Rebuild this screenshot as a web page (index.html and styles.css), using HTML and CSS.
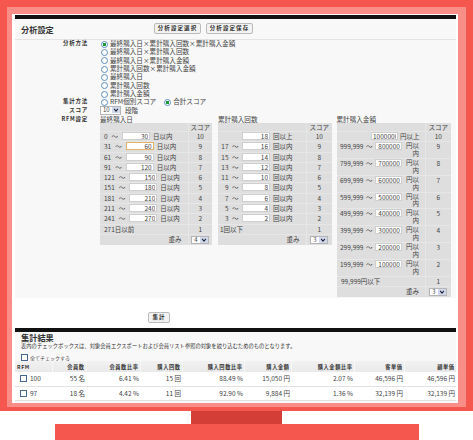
FILE: index.html
```html
<!DOCTYPE html>
<html lang="ja">
<head>
<meta charset="utf-8">
<title>分析設定</title>
<link rel="stylesheet" href="styles.css">
</head>
<body>
<div class="monitor">
  <div class="frame">
    <div class="bezel">
      <div class="screen">
        <section class="panel">
          <header class="panel-head">
            <h2 class="title">分析設定</h2>
            <button class="btn">分析設定選択</button>
            <button class="btn">分析設定保存</button>
          </header>
          <div class="form">
            <div class="label label-first">分析方法</div>
            <div class="radios">
              <label class="radio-row"><input type="radio" name="m" checked>最終購入日×累計購入回数×累計購入金額</label>
              <label class="radio-row"><input type="radio" name="m">最終購入日×累計購入回数</label>
              <label class="radio-row"><input type="radio" name="m">最終購入日×累計購入金額</label>
              <label class="radio-row"><input type="radio" name="m">累計購入回数×累計購入金額</label>
              <label class="radio-row"><input type="radio" name="m">最終購入日</label>
              <label class="radio-row"><input type="radio" name="m">累計購入回数</label>
              <label class="radio-row"><input type="radio" name="m">累計購入金額</label>
            </div>
            <div class="label">集計方法</div>
            <div class="radio-line">
              <label class="radio-row"><input type="radio" name="t">RFM個別スコア</label>
              <label class="radio-row"><input type="radio" name="t" checked>合計スコア</label>
            </div>
            <div class="label">スコア</div>
            <div class="score-line"><span class="select select-wide"><span>10</span><svg viewBox="0 0 8 8"><path d="M1.5 2.5 4 5.5 6.500 2.500"/></svg></span><span>段階</span></div>
            <div class="label">RFM設定</div>
            <div class="tables">
              <div class="block b1">
                <div class="block-title">最終購入日</div>
                <table class="rfm">
                  <tr class="r-head"><td></td><td class="sc">スコア</td></tr>
                  <tr><td>0<span class="tilde">～</span><input class="num" value="30"><span class="unit">日以内</span></td><td class="sc">10</td></tr>
                  <tr><td>31<span class="tilde">～</span><input class="num focus" value="60"><span class="unit">日以内</span></td><td class="sc">9</td></tr>
                  <tr><td>61<span class="tilde">～</span><input class="num" value="90"><span class="unit">日以内</span></td><td class="sc">8</td></tr>
                  <tr><td>91<span class="tilde">～</span><input class="num" value="120"><span class="unit">日以内</span></td><td class="sc">7</td></tr>
                  <tr><td>121<span class="tilde">～</span><input class="num" value="150"><span class="unit">日以内</span></td><td class="sc">6</td></tr>
                  <tr><td>151<span class="tilde">～</span><input class="num" value="180"><span class="unit">日以内</span></td><td class="sc">5</td></tr>
                  <tr><td>181<span class="tilde">～</span><input class="num" value="210"><span class="unit">日以内</span></td><td class="sc">4</td></tr>
                  <tr><td>211<span class="tilde">～</span><input class="num" value="240"><span class="unit">日以内</span></td><td class="sc">3</td></tr>
                  <tr><td>241<span class="tilde">～</span><input class="num" value="270"><span class="unit">日以内</span></td><td class="sc">2</td></tr>
                  <tr><td>271日以前</td><td class="sc">1</td></tr>
                  <tr class="r-foot"><td class="weight">重み</td><td class="sc"><span class="select"><span>4</span><svg viewBox="0 0 8 8"><path d="M1.5 2.5 4 5.5 6.500 2.500"/></svg></span></td></tr>
                </table>
              </div>
              <div class="block b2">
                <div class="block-title">累計購入回数</div>
                <table class="rfm">
                  <tr class="r-head"><td></td><td class="sc">スコア</td></tr>
                  <tr><td><span class="pre"></span><input class="num" value="18"><span class="unit">回以上</span></td><td class="sc">10</td></tr>
                  <tr><td><span class="pre">17<span class="tilde">～</span></span><input class="num" value="16"><span class="unit">回以内</span></td><td class="sc">9</td></tr>
                  <tr><td><span class="pre">15<span class="tilde">～</span></span><input class="num" value="14"><span class="unit">回以内</span></td><td class="sc">8</td></tr>
                  <tr><td><span class="pre">13<span class="tilde">～</span></span><input class="num" value="12"><span class="unit">回以内</span></td><td class="sc">7</td></tr>
                  <tr><td><span class="pre">11<span class="tilde">～</span></span><input class="num" value="10"><span class="unit">回以内</span></td><td class="sc">6</td></tr>
                  <tr><td><span class="pre">9<span class="tilde">～</span></span><input class="num" value="8"><span class="unit">回以内</span></td><td class="sc">5</td></tr>
                  <tr><td><span class="pre">7<span class="tilde">～</span></span><input class="num" value="6"><span class="unit">回以内</span></td><td class="sc">4</td></tr>
                  <tr><td><span class="pre">5<span class="tilde">～</span></span><input class="num" value="4"><span class="unit">回以内</span></td><td class="sc">3</td></tr>
                  <tr><td><span class="pre">3<span class="tilde">～</span></span><input class="num" value="2"><span class="unit">回以内</span></td><td class="sc">2</td></tr>
                  <tr><td>1回以下</td><td class="sc">1</td></tr>
                  <tr class="r-foot"><td class="weight">重み</td><td class="sc"><span class="select"><span>3</span><svg viewBox="0 0 8 8"><path d="M1.5 2.5 4 5.5 6.500 2.500"/></svg></span></td></tr>
                </table>
              </div>
              <div class="block b3">
                <div class="block-title">累計購入金額</div>
                <table class="rfm">
                  <tr class="r-head"><td></td><td class="sc">スコア</td></tr>
                  <tr><td><span class="pre-money"></span><input class="num" value="1000000"><span class="unit-top">円以上</span></td><td class="sc">10</td></tr>
                  <tr class="tall"><td>999,999<span class="tilde">～</span><input class="num" value="800000"><span class="unit-wrap">円以内</span></td><td class="sc">9</td></tr>
                  <tr class="tall"><td>799,999<span class="tilde">～</span><input class="num" value="700000"><span class="unit-wrap">円以内</span></td><td class="sc">8</td></tr>
                  <tr class="tall"><td>699,999<span class="tilde">～</span><input class="num" value="600000"><span class="unit-wrap">円以内</span></td><td class="sc">7</td></tr>
                  <tr class="tall"><td>599,999<span class="tilde">～</span><input class="num" value="500000"><span class="unit-wrap">円以内</span></td><td class="sc">6</td></tr>
                  <tr class="tall"><td>499,999<span class="tilde">～</span><input class="num" value="400000"><span class="unit-wrap">円以内</span></td><td class="sc">5</td></tr>
                  <tr class="tall"><td>399,999<span class="tilde">～</span><input class="num" value="300000"><span class="unit-wrap">円以内</span></td><td class="sc">4</td></tr>
                  <tr class="tall"><td>299,999<span class="tilde">～</span><input class="num" value="200000"><span class="unit-wrap">円以内</span></td><td class="sc">3</td></tr>
                  <tr class="tall"><td>199,999<span class="tilde">～</span><input class="num" value="100000"><span class="unit-wrap">円以内</span></td><td class="sc">2</td></tr>
                  <tr><td class="last-money">99,999円以下</td><td class="sc">1</td></tr>
                  <tr class="r-foot"><td class="weight">重み</td><td class="sc"><span class="select"><span>3</span><svg viewBox="0 0 8 8"><path d="M1.5 2.5 4 5.5 6.500 2.500"/></svg></span></td></tr>
                </table>
              </div>
            </div>
          </div>
        </section>
        <div class="submit-row"><button class="btn btn-small">集計</button></div>
        <section class="results">
          <h2 class="title title-results">集計結果</h2>
          <p class="note">表内のチェックボックスは、対象会員エクスポートおよび会員リスト参照の対象を絞り込むためのものとなります。</p>
          <label class="check-all"><input type="checkbox">全てチェックする</label>
          <table class="data">
            <colgroup><col class="c1"><col class="c2"><col class="c3"><col class="c4"><col class="c5"><col class="c6"><col class="c7"><col class="c8"><col class="c9"></colgroup>
            <thead>
              <tr><th class="first">RFM</th><th>会員数</th><th>会員数比率</th><th>購入回数</th><th>購入回数比率</th><th>購入金額</th><th>購入金額比率</th><th>客単価</th><th>顧単価</th></tr>
            </thead>
            <tbody>
              <tr><td class="first"><input type="checkbox">100</td><td>55 名</td><td>6.41 %</td><td>15 回</td><td>88.49 %</td><td>15,050 円</td><td>2.07 %</td><td>46,596 円</td><td>46,596 円</td></tr>
              <tr><td class="first"><input type="checkbox">97</td><td>18 名</td><td>4.42 %</td><td>11 回</td><td>92.90 %</td><td>9,884 円</td><td>1.36 %</td><td>32,139 円</td><td>32,139 円</td></tr>
            </tbody>
          </table>
        </section>
      </div>
    </div>
  </div>
  <div class="stand"></div>
  <div class="base"></div>
</div>
</body>
</html>
```
FILE: styles.css
```css
* { box-sizing: border-box; }
html, body { margin: 0; background: #fff; }
body {
  width: 473px;
  height: 440px;
  overflow: hidden;
  font-family: "Noto Sans CJK JP", "Liberation Sans", sans-serif;
  font-size: 6.5px;
  color: #444;
}
.monitor { display: flex; flex-direction: column; align-items: center; }
.frame { width: 473px; height: 411px; padding: 7px; background: #f5574e; }
.bezel { height: 400px; padding: 7px 8px 4px 5px; background: #f98e88; }
.screen { height: 389px; padding: 1px 2px 0 3px; background: #fff; overflow: hidden; }
.stand { width: 91px; height: 13px; background: #d33f36; }
.base { width: 364px; height: 16px; background: #f5574e; }

.panel { height: 283px; border-top: 4px solid #111; background: #f8f8f8; }
.panel-head {
  display: flex;
  align-items: center;
  gap: 5px;
  height: 21px;
  padding: 0 0 1px 6px;
  border-bottom: 1px solid #e4e4e4;
}
.title { margin: 0; width: 128px; font-size: 8.2px; line-height: 10px; font-weight: 700; color: #333; }
.btn {
  width: 47px;
  height: 11px;
  padding: 0;
  border: 1px solid #bbb;
  border-radius: 2px;
  background: #f2f2f2;
  font: 700 5.5px/9px "Noto Sans CJK JP", sans-serif;
  letter-spacing: 1.1px;
  color: #333;
}
.btn-small { width: 22px; }

.form { display: grid; grid-template-columns: 73px 1fr; column-gap: 12px; margin-top: -1px; }
.label {
  text-align: right;
  font-size: 5.5px;
  font-weight: 700;
  letter-spacing: 0.75px;
  line-height: 8.5px;
  color: #333;
}
.radios { display: flex; flex-direction: column; }
.radio-row { display: flex; align-items: center; height: 8.33px; white-space: nowrap; font-size: 6.6px; line-height: 8.33px; }
input[type="radio"] {
  appearance: none;
  flex: none;
  width: 7px;
  height: 7px;
  margin: 2px 2px 0 1px;
  border: 1px solid #5f8fc2;
  border-radius: 50%;
  background: #fff;
}
input[type="radio"]:checked { background: radial-gradient(circle, #1d9a3c 0 1.6px, #fff 2px); }
.radio-line { display: flex; gap: 7px; height: 8.7px; }
.score-line { display: flex; align-items: center; gap: 4px; height: 9px; }
.select {
  display: inline-flex;
  align-items: center;
  justify-content: space-between;
  width: 18px;
  height: 8px;
  padding: 0 0 0 2px;
  border: 1px solid #b5b5b5;
  background: #fff;
  vertical-align: top;
  line-height: 6px;
  font-size: 6px;
}
.select svg { width: 8px; height: 6px; background: #cfd8ec; fill: none; stroke: #223; stroke-width: 1.4; }
.select-wide { width: 21px; height: 9px; }

.tables { display: flex; align-items: flex-start; gap: 6px; }
.block-title { height: 8px; line-height: 8px; font-size: 6.6px; }
.b1 { width: 112px; }
.b2 { width: 114px; }
.b3 { width: 114px; margin-left: -1.5px; }
.rfm {
  width: 100%;
  table-layout: fixed;
  border-collapse: collapse;
  background: #dedede;
  font-size: 6.5px;
  line-height: 9.3px;
}
.rfm td { height: 10.3px; padding: 0 0 0 4px; vertical-align: top; white-space: nowrap; border-top: 1px solid #e6e6e6; }
.rfm td.sc { width: 24px; padding: 0; text-align: center; border-left: 1px solid #e6e6e6; }
.b2 .rfm td { padding-left: 2px; }
.b2 .rfm td.sc { width: 26px; padding: 0; }
.b3 .rfm td { padding-left: 3.5px; line-height: 8px; }
.b3 .rfm td.sc { width: 25px; padding: 0; }
.rfm .r-head td { height: 8px; line-height: 8px; border-top: 0; }
.rfm .r-foot td { height: 11px; line-height: 9px; }
.rfm td.weight { padding: 0 6px 0 0; text-align: right; }
.rfm .r-foot .select { margin-top: 1px; }
.rfm .tall td { height: 16.8px; }
.rfm td.last-money { padding-left: 4.5px; height: 9px; }
.num {
  width: 28px;
  height: 8px;
  margin: 0;
  padding: 0 1px;
  border: 1px solid #cfcfcf;
  background: #fff;
  text-align: right;
  font: 6.5px/6px "Noto Sans CJK JP", sans-serif;
  color: #444;
  vertical-align: top;
}
.num.focus { border-color: #e2b267; }
.b3 .num { width: 27px; }
.tilde { margin: 0 4px; }
.unit { margin-left: 3px; }
.pre { display: inline-block; width: 22px; text-align: right; vertical-align: top; }
.pre .tilde { margin: 0 3.5px; }
.b3 .tilde { margin: 0 2.5px; }
.pre-money { display: inline-block; width: 31px; }
.unit-top { margin-left: 2px; }
.unit-wrap {
  display: inline-block;
  width: 14px;
  margin-left: 3px;
  text-align: right;
  white-space: normal;
  vertical-align: top;
  line-height: 7.8px;
}

.submit-row { height: 30px; padding: 13px 0 0 133px; }
.results { height: 75px; border-top: 4px solid #111; background: #f8f8f8; }
.title-results { width: auto; padding-left: 6px; }
.note { margin: 0; padding-left: 6px; height: 8px; font-size: 5.3px; line-height: 8px; white-space: nowrap; color: #333; }
.check-all { display: flex; align-items: center; height: 11px; padding: 3px 0 0 6px; font-size: 5px; }
input[type="checkbox"] {
  appearance: none;
  flex: none;
  width: 7px;
  height: 7px;
  margin: 0 2px 0 0;
  border: 1px solid #46678f;
  background: #fff;
}
.data { width: 441px; table-layout: fixed; border-collapse: collapse; background: #fff; }
.c1 { width: 37px; } .c2 { width: 34px; } .c3 { width: 54px; }
.c4 { width: 42px; } .c5 { width: 62px; } .c6 { width: 47px; }
.c7 { width: 63px; } .c8 { width: 50px; } .c9 { width: 52px; }
.data th {
  height: 11px;
  padding: 0 1px 0 0;
  text-align: right;
  font-size: 5.2px;
  line-height: 10px;
  letter-spacing: 0.6px;
  font-weight: 700;
  color: #333;
  background: linear-gradient(#f1f1f1, #e9e9e9);
  border-right: 1px solid #f8f8f8;
}
.data td {
  height: 14px;
  padding: 0 1px 0 0;
  text-align: right;
  font-size: 6.5px;
  line-height: 13px;
  border-bottom: 1px solid #e2e2e2;
}
.data .first { padding-left: 2px; text-align: left; }
.data td.first { padding-left: 5px; }
.data td input { margin: 0 3px 0 0; vertical-align: -1px; }
```
